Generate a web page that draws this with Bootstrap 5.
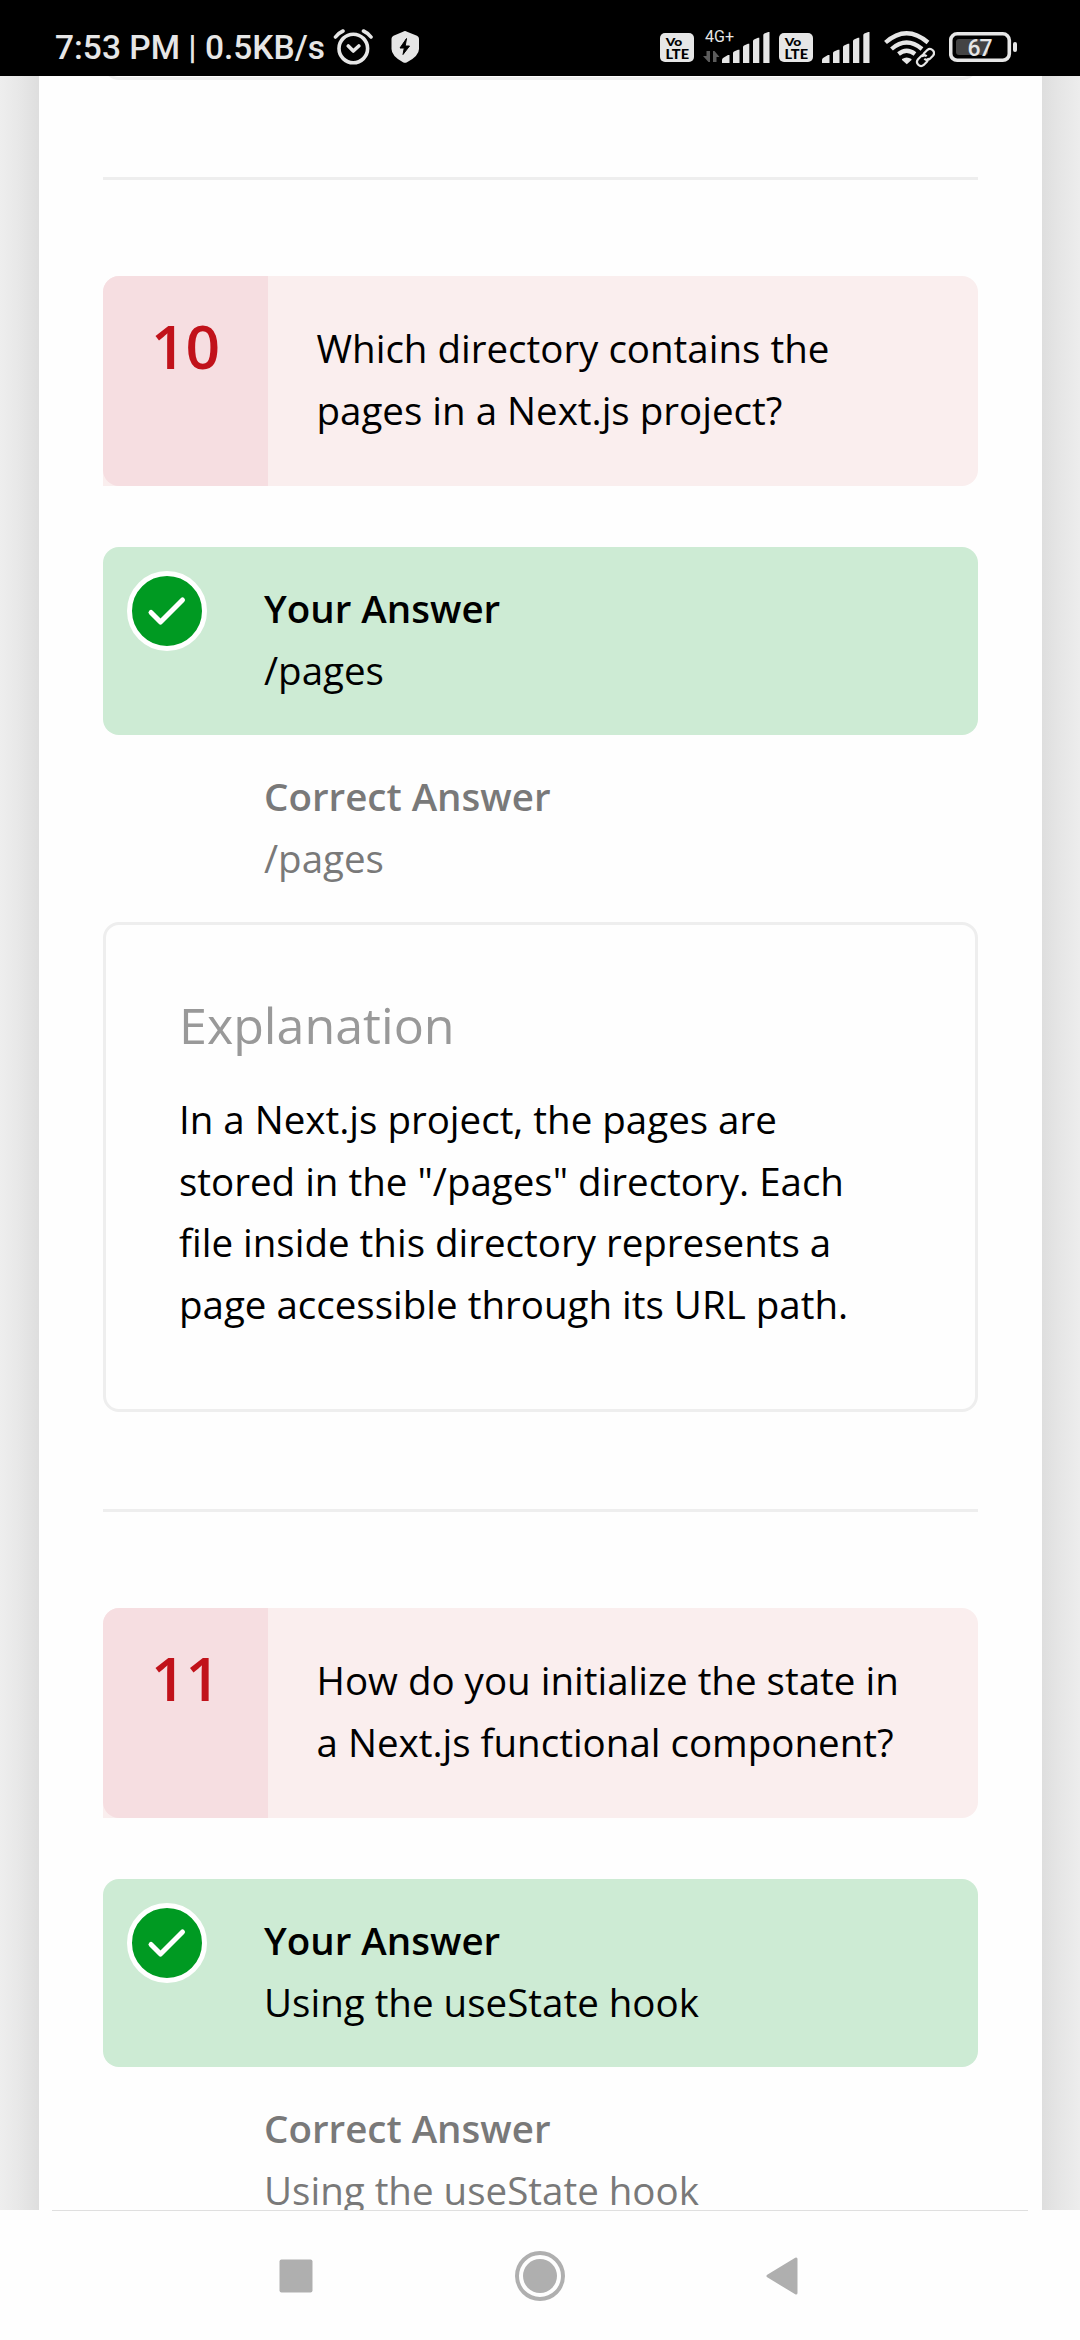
<!DOCTYPE html>
<html lang="en">
<head>
<meta charset="utf-8">
<meta name="viewport" content="width=device-width, initial-scale=1">
<title>Quiz results</title>
<link href="https://cdn.jsdelivr.net/npm/bootstrap@5.3.0/dist/css/bootstrap.min.css" rel="stylesheet">
<style>
  body { width: 1080px; height: 2340px; font-family: "Open Sans", "Noto Sans", sans-serif; font-size: 38.5px; line-height: 61.6px; color: #000; background: #fefefe; }
  .statusbar { height: 76px; background: #000; color: #e6e6e6; font-family: Roboto, sans-serif; padding: 0 63px 0 55px; }
  .statusbar svg { height: 76px; flex: none; }
  .clock { font-size: 33.5px; font-weight: 500; padding-top: 20px; height: 76px; line-height: 56px; white-space: nowrap; width: 278px; }
  .viewport { height: 2134px; background: linear-gradient(90deg, #eee 0, #e8e8e8 18px, #dedede 39px, #dedede 1042px, #e5e5e5 1058px, #ededed 1080px); padding: 0 38px 0 39px; }
  .sheet { display: flow-root; background: #fefefe; padding: 0 64px; height: 100%; overflow: hidden; }
  .rule { height: 3px; background: #eee; margin: 97px 0 96px; }
  .outlined { border: 3px solid #eee; border-radius: 16px; }
  .previous { height: 60px; margin-top: -56px; }
  .question { height: 210px; background: #faeeee; border-radius: 16px 16px 16px 0; margin-bottom: 61px; }
  .number { width: 165px; background: #f6dee1; border-radius: 16px 0 0 16px; color: #c1121a; font-size: 60.5px; font-weight: 600; line-height: 84px; padding-top: 28px; padding-left: 48px; }
  .prompt { padding: 42px 0 0 48.5px; white-space: nowrap; }
  .answer { height: 188px; padding: 31px 0 0 24px; border-radius: 16px; }
  .given { background: #cdebd4; }
  .answer-right { height: 187px; padding-left: 161px; color: #797979; }
  .tick { width: 80px; height: 80px; margin: -7px 57px 0 0; }
  .explanation { height: 490px; padding: 70px 0 0 73px; white-space: nowrap; }
  .explanation h2 { font-size: 50.2px; font-weight: 400; line-height: 60px; color: #999; margin-bottom: 34px; }
  .navkeys { height: 130px; background: #fefefe; }
  .navkeys hr { margin: 0 52px; border-top: 1px solid #dfdfdf; opacity: 1; }
  .keys { padding: 0 282px 0 279px; height: 129px; }
</style>
<script src="https://cdn.jsdelivr.net/npm/bootstrap@5.3.0/dist/js/bootstrap.bundle.min.js"></script>
</head>
<body class="d-flex flex-column overflow-hidden">
<svg class="d-none" xmlns="http://www.w3.org/2000/svg">
  <symbol id="volte" viewBox="0 0 34 76">
    <rect x="0" y="33" width="34" height="29" rx="5" fill="#e6e6e6"/>
    <g font-family="Lato, sans-serif" font-weight="900" fill="#000">
      <text x="5.8" y="46" font-size="12" textLength="16.500" lengthAdjust="spacingAndGlyphs">Vo</text>
      <text x="5.5" y="58.5" font-size="12.500" textLength="23.5" lengthAdjust="spacingAndGlyphs">LTE</text>
    </g>
  </symbol>
  <symbol id="bars" viewBox="0 0 48 76">
    <path fill="#e6e6e6" d="M0 63v-3q0-1 1-2l5-3h1.500v8zM11 63V53q0-1 1-1.500l4-1.700h1.500V63zM21 63V47q0-1 1-1.500l4-1.700h1.300V63zM31 63V41q0-1 1-1.500l4-1.700h1.300V63zM41.300 63V35q0-1 1-1.500l4-1.500h1.200V63z"/>
  </symbol>
  <symbol id="tick" viewBox="0 0 80 80">
    <circle cx="40" cy="40" r="37.500" fill="#009a22" stroke="#fff" stroke-width="5"/>
    <path d="M24 41.500 33.500 51 55.500 29" fill="none" stroke="#fff" stroke-width="5" stroke-linecap="round" stroke-linejoin="round"/>
  </symbol>
</svg>

<header class="statusbar d-flex justify-content-between flex-shrink-0">
  <div class="d-flex">
    <div class="clock">7:53 PM | 0.5KB/s</div>
    <svg width="40" viewBox="333 0 40 76" fill="none" stroke="#e6e6e6" stroke-linecap="round" stroke-linejoin="round">
      <circle cx="353.300" cy="48.500" r="14.300" stroke-width="3.600"/>
      <path d="M335.500 37q3-4 7.500-6M371 37q-3-4-7.500-6M348.300 46l5 5 5.500-5" stroke-width="3.600"/>
    </svg>
    <svg class="ms-3" width="33" viewBox="389 0 33 76">
      <path fill="#e6e6e6" d="M405 31q1 0 2 .7l10 4q2 .8 2 3V49q0 7-12 13.300-2 1-4 0Q391.500 56 391.500 49V38.700q0-2.200 2-3l9.500-4q1-.7 2-.7z"/>
      <path fill="#000" stroke="#000" stroke-linejoin="round" d="M406.500 38.500 400 48h4.300l-1.300 6.500 6.500-8.500h-4.300z"/>
    </svg>
  </div>
  <div class="d-flex">
    <svg width="34"><use href="#volte"/></svg>
    <svg width="28" viewBox="694 0 28 76" overflow="visible">
      <text x="705" y="42" font-family="Roboto, sans-serif" font-size="16" fill="#e6e6e6" textLength="29" lengthAdjust="spacingAndGlyphs">4G+</text>
      <path fill="#5c5c5c" d="M706.500 51h3.500v11h-1.500l-5.500-6h3.500zM713 51h1.500l5 6h-3v5H713z"/>
    </svg>
    <svg width="48"><use href="#bars"/></svg>
    <svg width="34" style="margin-left:9px"><use href="#volte"/></svg>
    <svg width="48" style="margin-left:9px"><use href="#bars"/></svg>
    <svg width="52" viewBox="883 0 52 76" style="margin-left:13px">
      <path d="M885.500 42.500q21-18.500 42.500 0M891.500 49q15-13 30.500 0M898.500 54q8-6.500 16.500 0" fill="none" stroke="#e6e6e6" stroke-width="4.300"/>
      <path fill="#e6e6e6" d="M902 59q4.500-3 9.500 0v1l-4.700 4.200-4.800-4.200z"/>
      <g fill="none" transform="rotate(-45 925.500 57.500)">
        <g stroke="#000" stroke-width="6"><rect x="915.500" y="53.800" width="11.500" height="7.400" rx="3.700"/><rect x="924" y="53.800" width="11.500" height="7.400" rx="3.700"/></g>
        <path stroke="#e6e6e6" stroke-width="2.200" d="M926.500 59.500q-1 2-3 2H919q-3.700-.3-3.700-4t3.700-4h4.500q3.500.3 3.700 4M924.500 55.500q1-2 3-2h4.500q3.700.3 3.700 4t-3.700 4h-4.500q-3.500-.3-3.700-4"/>
      </g>
    </svg>
    <svg width="68" viewBox="949 0 68 76" style="margin-left:14px">
      <rect x="950.700" y="33.800" width="58.600" height="26.500" rx="6.500" fill="none" stroke="#e6e6e6" stroke-width="3.600"/>
      <rect x="956" y="39" width="32" height="16" rx="3" fill="#444"/>
      <rect x="1013" y="42" width="4" height="10" rx="2" fill="#e6e6e6"/>
      <text x="967.500" y="56" font-family="Roboto, sans-serif" font-weight="500" font-size="23" fill="#e6e6e6" textLength="25">67</text>
    </svg>
  </div>
</header>

<main class="viewport flex-shrink-0 overflow-hidden">
  <div class="sheet">
    <div class="previous outlined"></div>
    <div class="rule"></div>

    <section>
      <div class="question d-flex">
        <div class="number">10</div>
        <div class="prompt">Which directory contains the<br>pages in a Next.js project?</div>
      </div>
      <div class="answer given d-flex align-items-start">
        <svg class="tick"><use href="#tick"/></svg>
        <div><div class="fw-semibold">Your Answer</div>/pages</div>
      </div>
      <div class="answer answer-right"><div class="fw-semibold">Correct Answer</div>/pages</div>
      <div class="explanation outlined">
        <h2>Explanation</h2>
        In a Next.js project, the pages are<br>stored in the "/pages" directory. Each<br>file inside this directory represents a<br>page accessible through its URL path.
      </div>
    </section>

    <div class="rule"></div>

    <section>
      <div class="question d-flex">
        <div class="number">11</div>
        <div class="prompt">How do you initialize the state in<br>a Next.js functional component?</div>
      </div>
      <div class="answer given d-flex align-items-start">
        <svg class="tick"><use href="#tick"/></svg>
        <div><div class="fw-semibold">Your Answer</div>Using the useState hook</div>
      </div>
      <div class="answer answer-right"><div class="fw-semibold">Correct Answer</div>Using the useState hook</div>
    </section>
  </div>
</main>

<footer class="navkeys flex-shrink-0">
  <hr>
  <div class="keys d-flex justify-content-between align-items-center">
    <svg width="34" height="34"><rect x=".5" y=".5" width="33" height="33" rx="2" fill="#afafaf"/></svg>
    <svg width="50" height="50"><circle cx="25" cy="25" r="23" fill="none" stroke="#afafaf" stroke-width="4"/><circle cx="25" cy="25" r="17" fill="#afafaf"/></svg>
    <svg width="32" height="38"><path d="M2 19 30 2v34z" fill="#afafaf" stroke="#afafaf" stroke-width="3" stroke-linejoin="round"/></svg>
  </div>
</footer>
</body>
</html>
